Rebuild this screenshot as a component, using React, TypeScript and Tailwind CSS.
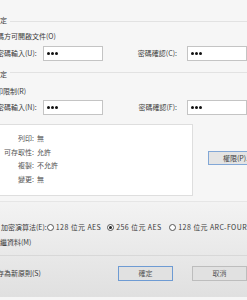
import React from "react";

const Dots: React.FC = () => (
  <div className="flex items-center gap-[1px] pl-[3px]">
    <span className="w-[3px] h-[3px] rounded-full bg-[#111]" />
    <span className="w-[3px] h-[3px] rounded-full bg-[#111]" />
    <span className="w-[3px] h-[3px] rounded-full bg-[#111]" />
  </div>
);

const PwInput: React.FC = () => (
  <div className="w-[60px] h-[15px] shrink-0 bg-white border border-[#c4c4c4] flex items-center">
    <Dots />
  </div>
);

const Radio: React.FC<{ checked?: boolean }> = ({ checked }) => (
  <span className="w-[7px] h-[7px] shrink-0 rounded-full border border-[#555] bg-white flex items-center justify-center">
    {checked && <span className="w-[3px] h-[3px] rounded-full bg-[#222]" />}
  </span>
);

export default function App() {
  return (
    <div className="w-[247px] h-[300px] overflow-hidden bg-[#f6f6f6] text-[#3a3a3a] text-[7px] leading-none font-['Noto_Sans_CJK_TC','Noto_Sans_CJK_SC',sans-serif]">
      {/* 文件開啟 */}
      <div className="pt-[15px] h-[26px] flex items-center whitespace-nowrap">
        <span className="ml-[-35px]">文件開啟設定</span>
        <div className="flex-1 h-px bg-[#e2e2e2] ml-[3px] mt-[2px]" />
      </div>
      <div className="mt-[4px] h-[12px] flex items-center whitespace-nowrap">
        <span className="ml-[-17px]">需密碼方可開啟文件(O)</span>
      </div>
      <div className="mt-[4px] flex items-center whitespace-nowrap">
        <span className="ml-[-3px] w-[54px]">密碼輸入(U):</span>
        <PwInput />
        <span className="w-[86px] text-right">密碼確認(C):</span>
        <div className="ml-[10px]">
          <PwInput />
        </div>
      </div>

      {/* 權限 */}
      <div className="mt-[7px] h-[12px] flex items-center whitespace-nowrap">
        <span className="ml-[-21px]">權限設定</span>
        <div className="flex-1 h-px bg-[#e2e2e2] ml-[3px] mt-[-3px]" />
      </div>
      <div className="mt-[5px] h-[12px] flex items-center whitespace-nowrap">
        <span className="ml-[-11px]">列印限制(R)</span>
      </div>
      <div className="mt-[3px] flex items-center whitespace-nowrap">
        <span className="ml-[-3px] w-[54px]">密碼輸入(N):</span>
        <PwInput />
        <span className="w-[86px] text-right">密碼確認(F):</span>
        <div className="ml-[10px]">
          <PwInput />
        </div>
      </div>

      <div className="mt-[9px] flex items-start whitespace-nowrap">
        <div className="ml-[-10px] w-[203px] h-[72px] shrink-0 bg-white border border-[#dedede] pt-[7px] text-[#555]">
          <div className="grid grid-cols-[43px_1fr] leading-[13.5px]">
            <span className="text-right">列印:</span>
            <span className="pl-[3px]">無</span>
            <span className="text-right">可存取性:</span>
            <span className="pl-[3px]">允許</span>
            <span className="text-right">複製:</span>
            <span className="pl-[3px]">不允許</span>
            <span className="text-right">變更:</span>
            <span className="pl-[3px]">無</span>
          </div>
        </div>
        <div className="ml-[15px] mt-[27px] w-[60px] h-[14px] shrink-0 bg-[#e4e4e4] border border-[#82a7d6] flex items-center pl-[14px]">
          權限(P)...
        </div>
      </div>

      <div className="mt-[5px] h-px bg-[#e6e6e6]" />

      {/* 加密 */}
      <div className="h-[95px] bg-linear-to-b from-[#f3f3f3] to-[#e0e0e0] pt-[19px] whitespace-nowrap">
        <div className="h-[12px] flex items-center">
          <span className="ml-[1px] w-[50px]">加密演算法(E):</span>
          <Radio />
          <span className="ml-[2px] w-[59px] tracking-[0.4px]">128 位元 AES</span>
          <Radio checked />
          <span className="ml-[2px] w-[61px] tracking-[0.4px]">256 位元 AES</span>
          <Radio />
          <span className="ml-[2px] tracking-[0.4px]">128 位元 ARC-FOUR</span>
        </div>
        <div className="mt-[3px] h-[12px] flex items-center">
          <span className="ml-[-21px]">加密中繼資料(M)</span>
        </div>
        <div className="mt-[7px] h-px bg-[#d8d8d8]" />
        <div className="mt-[10px] flex items-center">
          <span className="ml-[-10px] w-[152px]">儲存為新原則(S)</span>
          <div className="w-[55px] h-[15px] shrink-0 bg-[#e1e1e1] border border-[#6e9bd3] flex items-center justify-center text-[#555]">
            確定
          </div>
          <div className="ml-[19px] w-[55px] h-[15px] shrink-0 bg-[#e1e1e1] border border-[#bdbdbd] flex items-center justify-center text-[#555]">
            取消
          </div>
        </div>
      </div>
    </div>
  );
}
